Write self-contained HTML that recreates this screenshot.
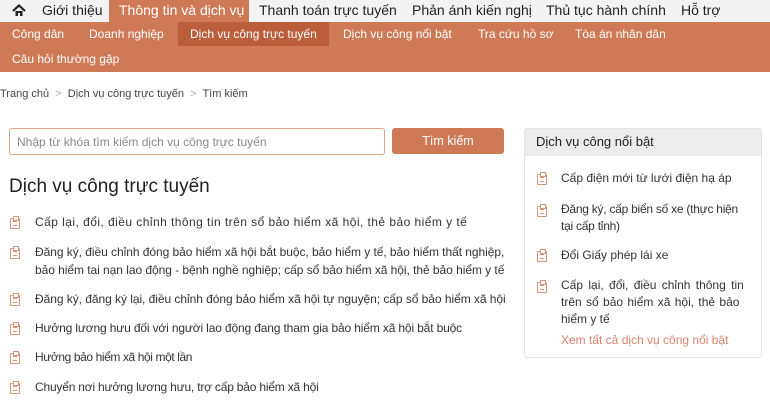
<!DOCTYPE html>
<html><head><meta charset="utf-8"><style>
*{margin:0;padding:0;box-sizing:border-box}
body{width:770px;height:410px;overflow:hidden;background:#fff;font-family:"Liberation Sans",sans-serif;color:#333;position:relative}
.a{position:absolute;white-space:nowrap}
.top{position:absolute;left:0;top:0;width:770px;height:22px;background:#f3f3f3}
.top span{position:absolute;top:2px;font-size:14px;color:#222}
.sub{position:absolute;left:0;top:22px;width:770px;height:50px;background:#cf7a57}
.sub span{position:absolute;font-size:12px;color:#fff}
.ic{position:absolute;width:10px;height:11px;border:1.3px solid #d9957a;border-radius:1px}
.ic:before{content:"";position:absolute;left:1.5px;top:-3px;width:4px;height:3px;border:1.2px solid #d9957a;background:#fff}
.ic:after{content:"";position:absolute;left:1.5px;top:2px;width:4px;height:3px;border-top:1px solid #d9957a;border-bottom:1px solid #d9957a}
.li{position:absolute;font-size:12px;color:#333;line-height:18px}
.j{display:block;white-space:nowrap}
</style></head><body>
<div class="top">
<svg class="a" style="left:12px;top:4px" width="14" height="13" viewBox="0 0 14 13"><path d="M1 7 L7 1.5 L13 7" stroke="#222" stroke-width="2.2" fill="none"/><path d="M3.5 7 V12 H6 V9 H8 V12 H10.5 V7" fill="#222"/></svg>
<span style="left:42px">Giới thiệu</span>
<div class="a" style="left:109px;top:0;width:140px;height:22px;background:#cf7a57"></div>
<span style="left:119px;color:#fff">Thông tin và dịch vụ</span>
<span style="left:259px">Thanh toán trực tuyến</span>
<span style="left:412px">Phản ánh kiến nghị</span>
<span style="left:546px">Thủ tục hành chính</span>
<span style="left:681px">Hỗ trợ</span>
</div>
<div class="sub">
<div class="a" style="left:178px;top:0;width:151px;height:24px;background:#bb5e3c"></div>
<span style="left:12px;top:5px">Công dân</span>
<span style="left:89px;top:5px">Doanh nghiệp</span>
<span style="left:190px;top:5px">Dịch vụ công trực tuyến</span>
<span style="left:343px;top:5px">Dịch vụ công nổi bật</span>
<span style="left:478px;top:5px">Tra cứu hồ sơ</span>
<span style="left:575px;top:5px">Tòa án nhân dân</span>
<span style="left:12px;top:30px">Câu hỏi thường gặp</span>
</div>
<div class="a" style="left:0;top:88px;font-size:11px;color:#444">Trang chủ <span style="color:#aaa">&nbsp;&gt;&nbsp;</span> Dịch vụ công trực tuyến <span style="color:#aaa">&nbsp;&gt;&nbsp;</span> Tìm kiếm</div>
<div class="a" style="left:9px;top:128px;width:376px;height:27px;border:1px solid #e0a58c;border-radius:3px"></div>
<div class="a" style="left:17px;top:135px;font-size:12px;color:#888">Nhập từ khóa tìm kiếm dịch vụ công trực tuyến</div>
<div class="a" style="left:392px;top:128px;width:112px;height:26px;background:#cf7a57;border-radius:3px;color:#fff;font-size:12.5px;text-align:center;line-height:26px">Tìm kiếm</div>
<div class="a" style="left:9px;top:176px;font-size:19px;color:#222">Dịch vụ công trực tuyến</div>
<div class="ic" style="left:10px;top:218px"></div><div class="li a" style="left:35px;top:213px;letter-spacing:0.45px">Cấp lại, đổi, điều chỉnh thông tin trên sổ bảo hiểm xã hội, thẻ bảo hiểm y tế</div>
<div class="ic" style="left:10px;top:248px"></div><div class="li a" style="left:35px;top:243px;letter-spacing:-0.05px">Đăng ký, điều chỉnh đóng bảo hiểm xã hội bắt buộc, bảo hiểm y tế, bảo hiểm thất nghiệp,<br>bảo hiểm tai nạn lao động - bệnh nghề nghiệp; cấp sổ bảo hiểm xã hội, thẻ bảo hiểm y tế</div>
<div class="ic" style="left:10px;top:295px"></div><div class="li a" style="left:35px;top:290px;letter-spacing:-0.05px">Đăng ký, đăng ký lại, điều chỉnh đóng bảo hiểm xã hội tự nguyện; cấp sổ bảo hiểm xã hội</div>
<div class="ic" style="left:10px;top:324px"></div><div class="li a" style="left:35px;top:319px;letter-spacing:-0.15px">Hưởng lương hưu đối với người lao động đang tham gia bảo hiểm xã hội bắt buộc</div>
<div class="ic" style="left:10px;top:353px"></div><div class="li a" style="left:35px;top:348px;letter-spacing:-0.4px">Hưởng bảo hiểm xã hội một lần</div>
<div class="ic" style="left:10px;top:383px"></div><div class="li a" style="left:35px;top:378px;letter-spacing:-0.2px">Chuyển nơi hưởng lương hưu, trợ cấp bảo hiểm xã hội</div>
<div class="a" style="left:524px;top:128px;width:238px;height:230px;border:1px solid #e4e4e4;border-radius:3px;background:#fff"></div>
<div class="a" style="left:525px;top:129px;width:236px;height:27px;background:#ececec;font-size:13px;color:#222;padding:5px 0 0 11px">Dịch vụ công nổi bật</div>
<div class="ic" style="left:537px;top:174px"></div><div class="li a" style="left:561px;top:169px">Cấp điện mới từ lưới điện hạ áp</div>
<div class="ic" style="left:537px;top:206px"></div><div class="li a" style="left:561px;top:201px;line-height:17px;letter-spacing:-0.25px"><span class="j">Đăng ký, cấp biển số xe (thực hiện</span><span class="j">tại cấp tỉnh)</span></div>
<div class="ic" style="left:537px;top:251px"></div><div class="li a" style="left:561px;top:246px">Đổi Giấy phép lái xe</div>
<div class="ic" style="left:537px;top:282px"></div><div class="li a" style="left:561px;top:277px;line-height:17px"><span class="j" style="word-spacing:2px">Cấp lại, đổi, điều chỉnh thông tin</span><span class="j" style="word-spacing:1px">trên sổ bảo hiểm xã hội, thẻ bảo</span><span class="j">hiểm y tế</span></div>
<div class="a" style="left:561px;top:333px;font-size:12px;color:#d9826a">Xem tất cả dịch vụ công nổi bật</div>
</body></html>
